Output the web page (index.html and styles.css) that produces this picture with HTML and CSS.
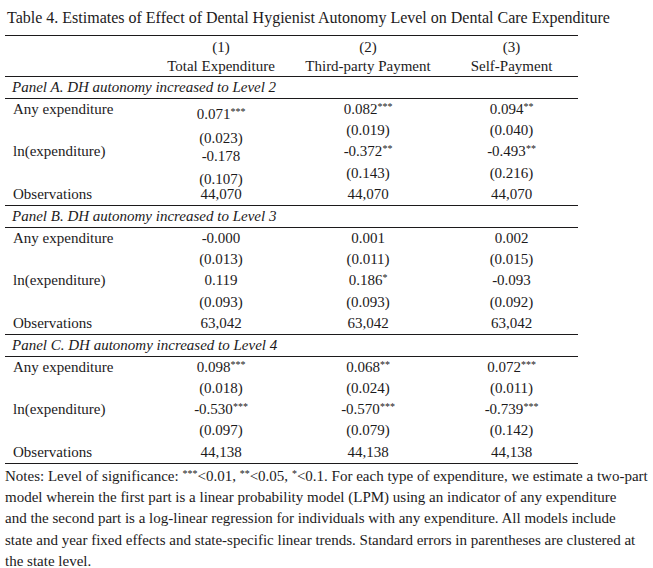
FILE: index.html
```html
<!DOCTYPE html>
<html>
<head>
<meta charset="utf-8">
<link rel="stylesheet" href="styles.css">
</head>
<body>
<div class="page">
  <p class="title">Table 4. Estimates of Effect of Dental Hygienist Autonomy Level on Dental Care Expenditure</p>
  <div class="table">
    <div class="head">
      <div></div>
      <div class="c">(1)<br>Total Expenditure</div>
      <div class="c">(2)<br>Third-party Payment</div>
      <div class="c">(3)<br>Self-Payment</div>
    </div>

    <div class="panel">Panel A. DH autonomy increased to Level 2</div>
    <div class="rows">
      <div class="lab">Any expenditure</div>
      <div class="c d5">0.071<sup class="s">***</sup></div>
      <div class="c">0.082<sup class="s">***</sup></div>
      <div class="c">0.094<sup class="s">**</sup></div>

      <div class="lab"></div>
      <div class="c d8">(0.023)</div>
      <div class="c">(0.019)</div>
      <div class="c">(0.040)</div>

      <div class="lab">ln(expenditure)</div>
      <div class="c d5">-0.178</div>
      <div class="c">-0.372<sup class="s">**</sup></div>
      <div class="c">-0.493<sup class="s">**</sup></div>

      <div class="lab"></div>
      <div class="c d6">(0.107)</div>
      <div class="c">(0.143)</div>
      <div class="c">(0.216)</div>

      <div class="lab">Observations</div>
      <div class="c">44,070</div>
      <div class="c">44,070</div>
      <div class="c">44,070</div>
    </div>

    <div class="panel">Panel B. DH autonomy increased to Level 3</div>
    <div class="rows">
      <div class="lab">Any expenditure</div>
      <div class="c">-0.000</div>
      <div class="c">0.001</div>
      <div class="c">0.002</div>

      <div class="lab"></div>
      <div class="c">(0.013)</div>
      <div class="c">(0.011)</div>
      <div class="c">(0.015)</div>

      <div class="lab">ln(expenditure)</div>
      <div class="c">0.119</div>
      <div class="c">0.186<sup class="s">*</sup></div>
      <div class="c">-0.093</div>

      <div class="lab"></div>
      <div class="c">(0.093)</div>
      <div class="c">(0.093)</div>
      <div class="c">(0.092)</div>

      <div class="lab">Observations</div>
      <div class="c">63,042</div>
      <div class="c">63,042</div>
      <div class="c">63,042</div>
    </div>

    <div class="panel">Panel C. DH autonomy increased to Level 4</div>
    <div class="rows">
      <div class="lab">Any expenditure</div>
      <div class="c">0.098<sup class="s">***</sup></div>
      <div class="c">0.068<sup class="s">**</sup></div>
      <div class="c">0.072<sup class="s">***</sup></div>

      <div class="lab"></div>
      <div class="c">(0.018)</div>
      <div class="c">(0.024)</div>
      <div class="c">(0.011)</div>

      <div class="lab">ln(expenditure)</div>
      <div class="c">-0.530<sup class="s">***</sup></div>
      <div class="c">-0.570<sup class="s">***</sup></div>
      <div class="c">-0.739<sup class="s">***</sup></div>

      <div class="lab"></div>
      <div class="c">(0.097)</div>
      <div class="c">(0.079)</div>
      <div class="c">(0.142)</div>

      <div class="lab">Observations</div>
      <div class="c">44,138</div>
      <div class="c">44,138</div>
      <div class="c">44,138</div>
    </div>
  </div>
  <p class="notes">Notes: Level of significance: <sup class="s">***</sup>&lt;0.01, <sup class="s">**</sup>&lt;0.05, <sup class="s">*</sup>&lt;0.1. For each type of expenditure, we estimate a two-part<br>model wherein the first part is a linear probability model (LPM) using an indicator of any expenditure<br>and the second part is a log-linear regression for individuals with any expenditure. All models include<br>state and year fixed effects and state-specific linear trends. Standard errors in parentheses are clustered at<br>the state level.</p>
</div>
</body>
</html>
```

FILE: styles.css
```css
html, body {
  margin: 0;
  padding: 0;
  background: #ffffff;
}

body {
  font-family: "Liberation Serif", "Times New Roman", serif;
  font-size: 15px;
  color: #1c1a1b;
}

.page {
  padding: 8px 0 0 5px;
}

.title {
  margin: 0 0 7px 2px;
  font-size: 16px;
  line-height: 20px;
  white-space: nowrap;
}

.table {
  width: 573px;
  border-top: 1px solid #1c1a1b;
}

.head,
.rows {
  display: grid;
  grid-template-columns: 146px 140px 154px 133px;
}

.head {
  padding-top: 2px;
  height: 38px;
  line-height: 19px;
  border-bottom: 1px solid #1c1a1b;
}

.panel {
  height: 21px;
  line-height: 21px;
  padding-left: 7px;
  font-style: italic;
  border-bottom: 1px solid #1c1a1b;
}

.rows {
  grid-template-rows: repeat(5, 21.2px);
  line-height: 21px;
  border-bottom: 1px solid #1c1a1b;
}

.lab {
  padding-left: 8px;
  white-space: nowrap;
}

.c {
  text-align: center;
  white-space: nowrap;
}

.d5 { margin-top: 5px; }
.d6 { margin-top: 6px; }
.d8 { margin-top: 8px; }

.s {
  font-size: 10px;
  line-height: 0;
  vertical-align: 4px;
}

.notes {
  margin: 2px 0 0 0;
  line-height: 21.3px;
  white-space: nowrap;
}
```
